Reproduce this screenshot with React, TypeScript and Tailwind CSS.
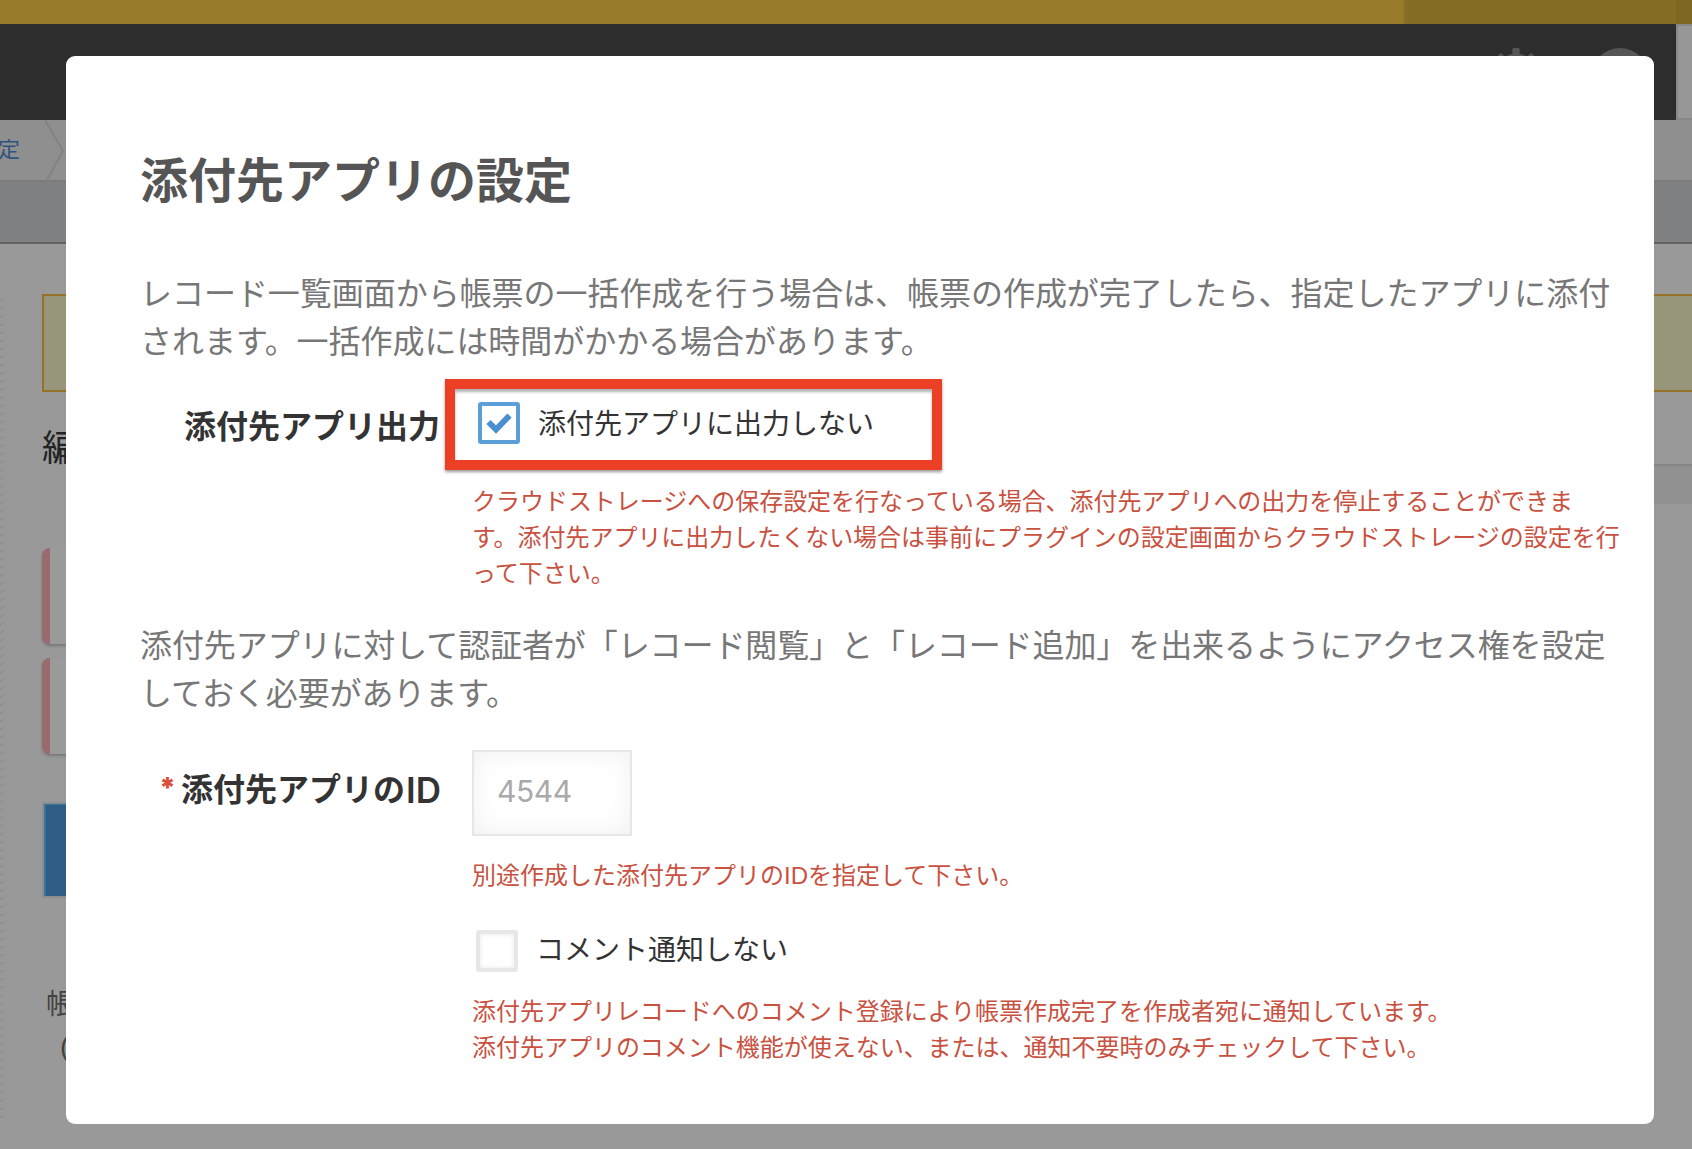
import React, { useState } from 'react';

interface CheckBoxProps {
  checked: boolean;
  onChange: () => void;
}

const CheckBox: React.FC<CheckBoxProps> = ({ checked, onChange }) => {
  return (
    <button
      type="button"
      role="checkbox"
      aria-checked={checked}
      onClick={onChange}
      className={
        checked
          ? 'block w-[42px] h-[42px] shrink-0 rounded-[3px] border-4 border-[#5b9fd9] bg-white'
          : 'block w-[42px] h-[42px] shrink-0 rounded-[3px] border-4 border-[#e6e8e8] bg-white shadow-[inset_0_0_4px_#e4e6e6]'
      }
    >
      {checked && (
        <svg viewBox="0 0 34 34" className="block w-[34px] h-[34px]" fill="none" stroke="#4a90d0" strokeWidth="6">
          <path d="M6.5 16 L14 23.5 L27.5 9.5" />
        </svg>
      )}
    </button>
  );
};

const Background: React.FC = () => {
  return (
    <div className="flex flex-col h-full">
      <div className="flex h-6 bg-[#977b2a]">
        <div className="ml-auto w-[272px] bg-[#866d26]" />
        <div className="w-4 bg-[#7e6723]" />
      </div>

      <header className="flex h-24 bg-[#2d2d2d]">
        <div className="flex ml-auto pt-6 mr-[27px] gap-[46px] text-[#555555]">
          <svg viewBox="0 0 58 58" className="w-[58px] h-[58px]" fill="currentColor">
            <circle cx="29" cy="25" r="19.5" />
            <rect x="25.3" y="0" width="7.4" height="50" rx="1.5" />
            <rect x="25.3" y="0" width="7.4" height="50" rx="1.5" transform="rotate(45 29 25)" />
            <rect x="25.3" y="0" width="7.4" height="50" rx="1.5" transform="rotate(90 29 25)" />
            <rect x="25.3" y="0" width="7.4" height="50" rx="1.5" transform="rotate(135 29 25)" />
          </svg>
          <div className="w-[58px] h-[58px] rounded-full bg-[#555555]" />
        </div>
        <div className="w-4 bg-[#979797] border-l-2 border-y-2 border-[#878989]" />
      </header>

      <nav className="flex h-[60px] bg-[#8f8f8f]">
        <span className="-ml-[2px] w-[47px] text-[22px] leading-[60px] text-[#315380] whitespace-nowrap">定</span>
        <svg viewBox="0 0 22 60" className="w-[22px] h-[60px]" fill="none">
          <path d="M0 0 L18 31 L2 60" stroke="#838383" strokeWidth="2" />
        </svg>
      </nav>
      <div className="h-16 bg-[#7f8081] border-t-2 border-t-[#7a7b7b] border-b-2 border-b-[#606163]" />

      <div className="flex grow bg-[#999999]">
        <div className="w-1 mt-[51px] h-[823px] bg-[repeating-linear-gradient(150deg,#999999_0px,#999999_4.5px,#8d8d8d_5.5px,#999999_7px)]" />
        <div className="grow pl-[38px] pt-[50px]">
          <div className="h-[98px] border-2 border-r-0 border-[#94722a] bg-[#98967a]" />
          <div className="flex justify-between">
            <div className="pt-[37px] text-[36px] leading-10 text-[#222222]">編集</div>
            <div className="mt-[72px] w-[100px] h-10 border-t-2 border-[#868686] bg-[#919191]" />
          </div>
          <div className="mt-11 w-[300px] h-24 rounded-lg border-l-8 border-[#996b6e] bg-[#9a9a9a] shadow-[0_2px_3px_#777777]" />
          <div className="mt-[14px] w-[300px] h-24 rounded-lg border-l-8 border-[#996b6e] bg-[#9a9a9a] shadow-[0_2px_3px_#777777]" />
          <div className="mt-12 w-[300px] h-24 border-2 border-[#8a8e8f] bg-[#305d85] shadow-[inset_2px_1px_1px_#39769c]" />
          <p className="mt-[86px] pl-1 text-[28px] leading-[42px] text-[#434343]">
            帳票
            <br />
            <span className="pl-[14px]">(</span>
          </p>
        </div>
      </div>
    </div>
  );
};

const App: React.FC = () => {
  const [noOutput, setNoOutput] = useState(true);
  const [noComment, setNoComment] = useState(false);
  const [appId, setAppId] = useState('');

  return (
    <div className="relative w-[1692px] h-[1149px] overflow-hidden bg-[#999999] font-['Liberation_Sans','Noto_Sans_CJK_JP',sans-serif]">
      <Background />

      {/* modal */}
      <div className="absolute left-[66px] top-[56px] w-[1588px] h-[1068px] rounded-[9px] bg-white pl-[74px] pt-[90px]">
        <h1 className="text-[48px] leading-[72px] font-bold text-[#555555]">添付先アプリの設定</h1>

        <p className="mt-[52px] text-[32px] leading-[48px] tracking-[-0.04px] text-[#777777] whitespace-nowrap">
          レコード一覧画面から帳票の一括作成を行う場合は、帳票の作成が完了したら、指定したアプリに添付
          <br />
          されます。一括作成には時間がかかる場合があります。
        </p>

        <div className="flex mt-[13px]">
          <div className="w-[300px] pt-[24px] text-right text-[32px] leading-[48px] font-bold text-[#333333] whitespace-nowrap">
            添付先アプリ出力
          </div>
          <div className="ml-[5px]">
            <div className="flex w-[497px] h-[91px] pl-[23px] pt-[13px] border-10 border-[#eb4026] shadow-[0_2px_3px_rgba(0,0,0,0.4),inset_0_3px_3px_rgba(0,0,0,0.3)]">
              <CheckBox checked={noOutput} onChange={() => setNoOutput(!noOutput)} />
              <span className="ml-[18px] text-[28px] leading-[46px] text-[#333333] whitespace-nowrap">添付先アプリに出力しない</span>
            </div>
            <p className="mt-[14px] ml-[27px] text-[24px] leading-[36px] tracking-[-0.03px] text-[#c9513f] whitespace-nowrap">
              クラウドストレージへの保存設定を行なっている場合、添付先アプリへの出力を停止することができま
              <br />
              す。添付先アプリに出力したくない場合は事前にプラグインの設定画面からクラウドストレージの設定を行
              <br />
              って下さい。
            </p>
          </div>
        </div>

        <p className="mt-[30px] text-[32px] leading-[48px] tracking-[-0.09px] text-[#777777] whitespace-nowrap">
          添付先アプリに対して認証者が「レコード閲覧」と「レコード追加」を出来るようにアクセス権を設定
          <br />
          しておく必要があります。
        </p>

        <div className="flex mt-[32px]">
          <div className="flex justify-end w-[301px] pt-[16px] text-[32px] leading-[48px] font-bold text-[#333333] whitespace-nowrap">
            <span className="mr-[5px] font-['Inter'] text-[28px] leading-[44px] font-black text-[#db5140]">*</span>
            添付先アプリの
            <span className="ml-px font-['Inter'] text-[35px] leading-[48px] font-semibold">ID</span>
          </div>
          <div className="ml-[31px]">
            <input
              type="text"
              placeholder="4544"
              value={appId}
              onChange={(e) => setAppId(e.target.value)}
              className="block w-[160px] h-[86px] pl-[23px] pb-1 border-2 border-[#e3e7e8] bg-white font-['Inter'] text-[30px] tracking-[-0.4px] text-[#333333] placeholder:text-[#a9a9a9] shadow-[inset_0_0_26px_#f0f0f0] outline-none"
            />
            <p className="mt-[22px] text-[24px] leading-[36px] text-[#c9513f] whitespace-nowrap">
              別途作成した添付先アプリのIDを指定して下さい。
            </p>
            <div className="flex mt-[36px] ml-1">
              <CheckBox checked={noComment} onChange={() => setNoComment(!noComment)} />
              <span className="ml-[18px] text-[28px] leading-[41px] text-[#333333] whitespace-nowrap">コメント通知しない</span>
            </div>
            <p className="mt-[22px] text-[24px] leading-[36px] tracking-[-0.02px] text-[#c9513f] whitespace-nowrap">
              添付先アプリレコードへのコメント登録により帳票作成完了を作成者宛に通知しています。
              <br />
              添付先アプリのコメント機能が使えない、または、通知不要時のみチェックして下さい。
            </p>
          </div>
        </div>
      </div>
    </div>
  );
};

export default App;
